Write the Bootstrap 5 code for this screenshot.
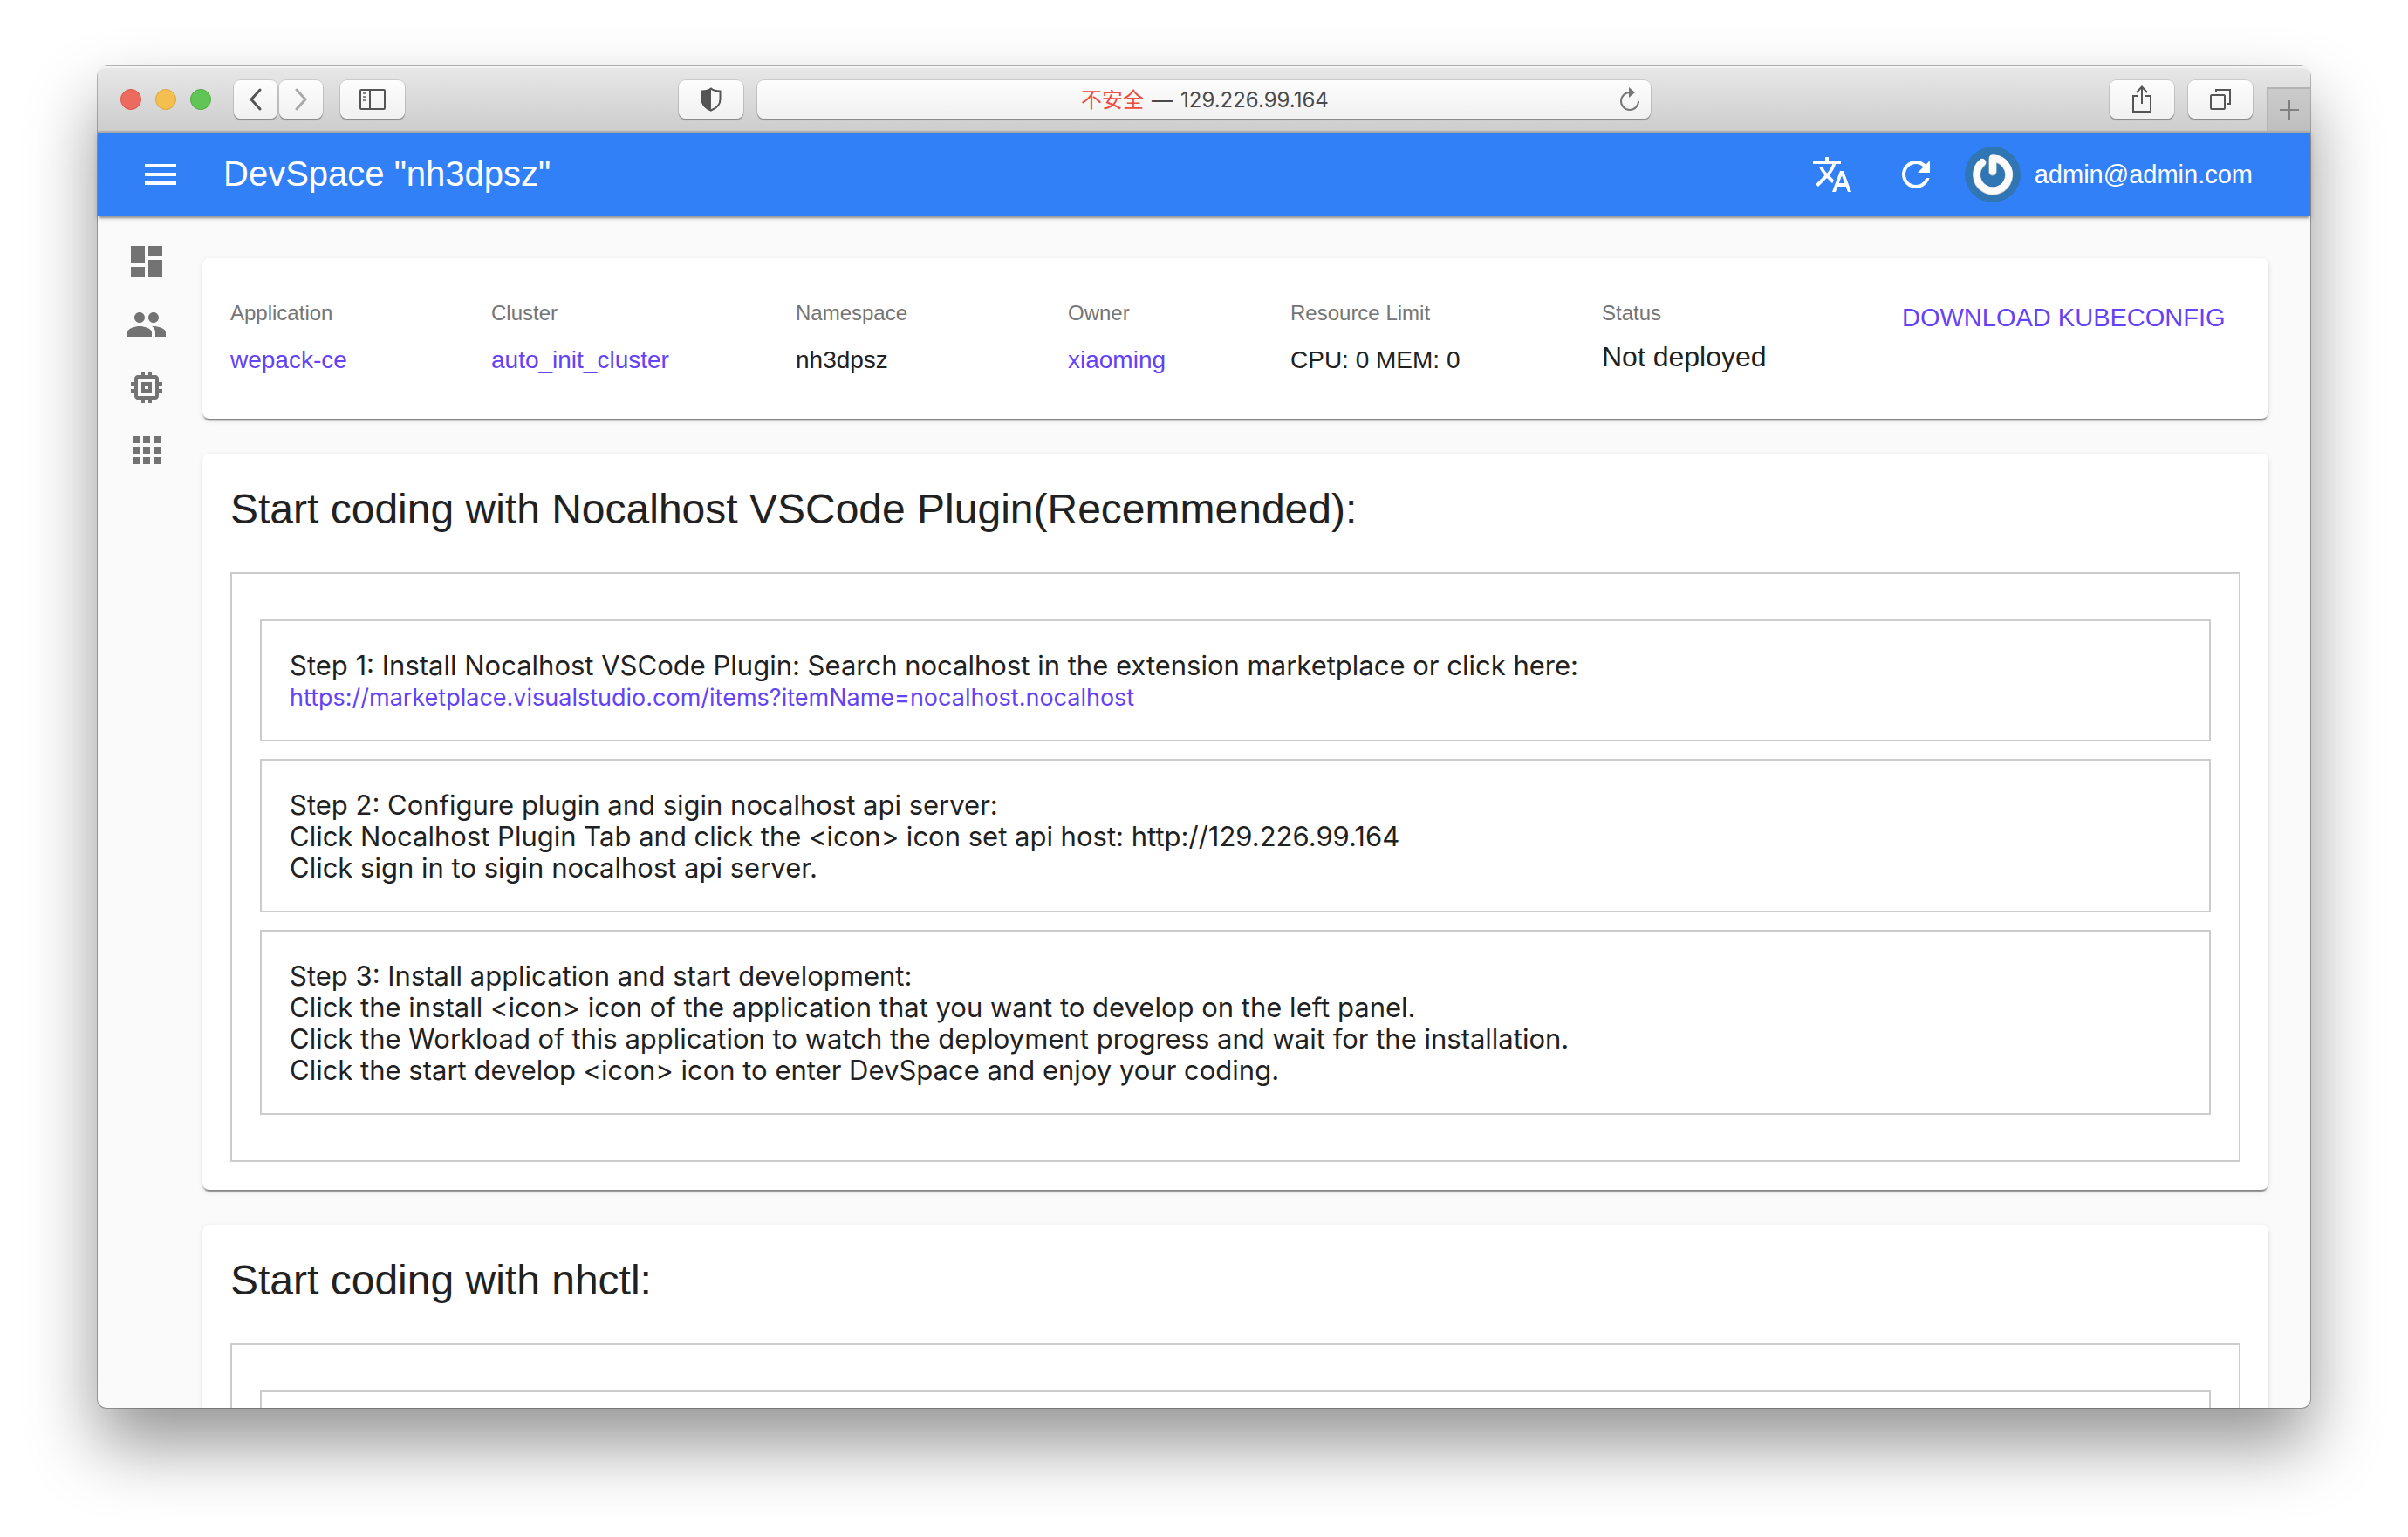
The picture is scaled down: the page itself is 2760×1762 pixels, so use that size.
<!DOCTYPE html>
<html lang="en">
<head>
<meta charset="utf-8">
<meta name="viewport" content="width=device-width, initial-scale=1">
<title>DevSpace</title>
<link href="https://cdn.jsdelivr.net/npm/bootstrap@5.3.0/dist/css/bootstrap.min.css" rel="stylesheet">
<script src="https://cdn.jsdelivr.net/npm/bootstrap@5.3.0/dist/js/bootstrap.bundle.min.js"></script>
<style>
  body { background: #fff; color: #212121; font-family: "Liberation Sans", Arial, sans-serif; padding: 76px 112px 148px; }
  svg { display: block; flex: none; }
  a, a:hover { color: #6442f5; text-decoration: none; }
  .browser { border-radius: 12px 12px 10px 10px; background: #fafafa; box-shadow: 0 0 0 1px rgba(0,0,0,.28), 0 42px 80px rgba(0,0,0,.42); }

  .toolbar { height: 76px; flex: none; padding: 2px 0 0 26px; background: linear-gradient(#e8e8e8, #cdcdcd); border-bottom: 2px solid #b1b1b1; box-shadow: inset 0 2px 0 #f4f4f4; }
  .light { width: 24px; height: 24px; border-radius: 50%; border: 1px solid; padding: 0; }
  .light-close { background: #ed6a5e; border-color: #d8574c; }
  .light-min { background: #f5bf4f; border-color: #dba63b; }
  .light-max { background: #61c555; border-color: #50ab42; }
  .chrome-btn, .address { height: 44px; border: 0; border-radius: 8px; background: linear-gradient(#fdfdfd, #f1f1f1); box-shadow: 0 0 0 1px rgba(0,0,0,.1), 0 2px 1px rgba(0,0,0,.25); color: #555; padding: 0; display: flex; align-items: center; justify-content: center; }
  .w-nav { width: 50px; }
  .w-tool { width: 74px; }
  .history { margin: 0 20px 0 26px; gap: 2px; }
  .space-left { flex: 314 1 0; }
  .space-right { flex: 526 1 0; }
  .address { flex: 0 1 1024px; margin-left: 16px; padding: 0 12px; font: 24px/32px Inter, "Noto Sans CJK SC", sans-serif; color: #4a4a4a; }
  .address-text { padding: 2px 0 0 40px; gap: 9px; }
  .address-text input { width: 182px; border: 0; padding: 0; background: none; color: inherit; font: inherit; outline: 0; }
  .insecure { color: #f04b3c; }
  .new-tab { width: 50px; height: 50px; margin-left: 16px; border: 0; border-top: 2px solid #b4b4b4; border-left: 2px solid #b4b4b4; background: linear-gradient(#cbcbcb, #bfbfbf); color: #808080; padding: 0; }

  .appbar { height: 96px; background: #3280f7; color: #fff; padding: 0 66px 0 48px; box-shadow: 0 4px 2px -2px rgba(0,0,0,.3), 0 2px 6px rgba(0,0,0,.2); z-index: 1; flex: none; }
  .appbar h1 { font-size: 40px; line-height: 48px; font-weight: 400; margin: 0 0 2px 48px; }
  .appbar button { border: 0; background: none; color: inherit; padding: 0; }
  .account { gap: 16px; font-size: 29px; line-height: 36px; }

  .side { width: 120px; flex: none; padding: 28px 0 0 32px; gap: 24px; }
  .side a { color: #737373; width: 48px; }
  .content { padding: 48px 48px 0 0; gap: 40px; min-width: 0; }
  .panel { border: 0; border-radius: 8px; background: #fff; color: inherit; box-shadow: 0 4px 2px -2px rgba(0,0,0,.36), 0 2px 2px rgba(0,0,0,.14), 0 2px 6px rgba(0,0,0,.1); padding: 32px; flex: none; }
  .summary { display: grid; grid-template-columns: 299fr 349fr 312fr 255fr 357fr 344fr 388fr; padding: 44px 32px; margin: 0; }
  .summary dt { font-size: 24px; line-height: 38px; font-weight: 400; color: #757575; margin-bottom: 10px; }
  .summary dd { font-size: 28px; line-height: 50px; margin: 0; }
  .summary .status { font-size: 32px; line-height: 42px; }
  .download { border: 0; background: none; padding: 0; color: #6442f5; font-size: 29px; line-height: 48px; align-self: start; text-align: left; }
  .summary, .summary dd { margin-bottom: 0; }
  .summary { padding-bottom: 42px; }
  .panel h2 { font-size: 48px; line-height: 64px; font-weight: 400; margin-bottom: 40px; }
  .frame { border: 2px solid #ccc; padding: 52px 32px; gap: 20px; }
  .step { border: 2px solid #ccc; padding: 33px 32px 31px; min-height: 140px; font: 31px/36px Inter, sans-serif; }
  .step p { margin: 0; }
  .step a { font-size: 27px; line-height: 38px; margin-bottom: -2px; display: block; }
</style>
</head>
<body class="vh-100">
<div class="browser d-flex flex-column h-100">
  <header class="toolbar d-flex align-items-center rounded-top-3">
    <div class="d-flex gap-3">
      <button class="light light-close" aria-label="Close"></button>
      <button class="light light-min" aria-label="Minimize"></button>
      <button class="light light-max" aria-label="Zoom"></button>
    </div>
    <div class="history d-flex">
      <button class="chrome-btn w-nav" aria-label="Back"><svg width="14" height="26" fill="none" stroke="currentColor" stroke-width="3" stroke-linecap="round" stroke-linejoin="round"><path d="M12 2 2 13l10 11"/></svg></button>
      <button class="chrome-btn w-nav" aria-label="Forward"><svg width="14" height="26" fill="none" stroke="#aaa" stroke-width="3" stroke-linecap="round" stroke-linejoin="round"><path d="M2 2l10 11L2 24"/></svg></button>
    </div>
    <button class="chrome-btn w-tool" aria-label="Sidebar"><svg width="30" height="24" fill="none" stroke="currentColor" stroke-width="2"><rect x="1" y="1" width="28" height="22" rx="1"/><path d="M12 1v22"/><path stroke="#888" d="M4 5h4M4 9h4M4 13h4"/></svg></button>
    <div class="space-left"></div>
    <button class="chrome-btn w-tool" aria-label="Privacy report"><svg width="24" height="28" viewBox="0 0 24 28"><path d="M12 1.5C9.500 3.800 5.500 4.500 1.500 4.500V14c0 6 4.500 10 10.500 12.500C18 24 22.500 20 22.500 14V4.500C18.500 4.500 14.500 3.800 12 1.500z" fill="none" stroke="currentColor" stroke-width="2"/><path d="M12 1C9 3.500 5 4 1 4v10c0 6 4.500 11 11 13.500z" fill="currentColor"/></svg></button>
    <div class="address">
      <div class="address-text d-flex flex-grow-1 justify-content-center">
        <label class="insecure" for="url">不安全</label><span>—</span><input id="url" value="129.226.99.164">
      </div>
      <button class="btn p-0 border-0" aria-label="Reload"><svg width="26" height="30" viewBox="0 0 26 30" fill="none" stroke="#777" stroke-width="2"><path d="M14 7a10 10 0 1 0 10 10"/><path d="M13 1l7 6-7 6z" fill="#777" stroke="none"/></svg></button>
    </div>
    <div class="space-right"></div>
    <div class="d-flex gap-3">
      <button class="chrome-btn w-tool" aria-label="Share"><svg width="24" height="32" fill="none" stroke="currentColor" stroke-width="2"><path d="M8 12H2v18h20V12h-6M12 21V2M6 8l6-6.500L18 8"/></svg></button>
      <button class="chrome-btn w-tool" aria-label="Show tabs"><svg width="26" height="26" fill="none" stroke="currentColor" stroke-width="2"><rect x="2" y="8" width="16" height="16" rx="1"/><path d="M8 5V2h16v16h-3"/></svg></button>
    </div>
    <button class="new-tab align-self-end d-flex align-items-center justify-content-center" aria-label="New tab"><svg width="22" height="22" stroke="currentColor" stroke-width="2"><path d="M11 0v22M0 11h22"/></svg></button>
  </header>

  <nav class="appbar d-flex align-items-center position-relative">
    <button aria-label="Menu"><svg width="48" height="48" viewBox="0 0 24 24" fill="currentColor"><path d="M3 18h18v-2H3v2zm0-5h18v-2H3v2zm0-7v2h18V6H3z"/></svg></button>
    <h1>DevSpace "nh3dpsz"</h1>
    <div class="d-flex gap-5 ms-auto me-4 pe-2">
      <button aria-label="Language"><svg width="48" height="48" viewBox="0 0 24 24" fill="currentColor"><path d="M12.870 15.070l-2.540-2.510.030-.030c1.740-1.940 2.980-4.170 3.710-6.530H17V4h-7V2H8v2H1v1.990h11.170C11.500 7.920 10.440 9.750 9 11.350 8.070 10.320 7.300 9.190 6.690 8h-2c.730 1.630 1.730 3.170 2.980 4.560l-5.090 5.020L4 19l5-5 3.110 3.110.760-2.040zM18.500 10h-2L12 22h2l1.120-3h4.750L21 22h2l-4.500-12zm-2.620 7l1.620-4.330L19.120 17h-3.240z"/></svg></button>
      <button aria-label="Refresh"><svg width="48" height="48" viewBox="0 0 24 24" fill="currentColor"><path d="M17.650 6.350C16.200 4.900 14.210 4 12 4c-4.420 0-7.990 3.580-7.990 8s3.570 8 7.990 8c3.730 0 6.840-2.550 7.730-6h-2.080c-.820 2.330-3.040 4-5.650 4-3.310 0-6-2.690-6-6s2.690-6 6-6c1.660 0 3.140.690 4.220 1.780L13 11h7V4l-2.350 2.350z"/></svg></button>
    </div>
    <button class="account d-flex align-items-center">
      <svg width="64" height="64"><circle cx="32" cy="32" r="32" fill="#3075b4"/><g fill="none" stroke-width="9" stroke-linecap="round" stroke-linejoin="round"><path d="M32 29V14A18.500 18.500 0 1 1 20 18.500" stroke="#c9cfd4"/><path d="M32 28V13.500A18.500 18.500 0 1 1 20 18" stroke="#fbfbfb" stroke-width="8"/></g></svg>
      <span>admin@admin.com</span>
    </button>
  </nav>

  <div class="d-flex flex-grow-1 overflow-hidden rounded-bottom-3">
    <aside class="side d-flex flex-column">
      <a href="#" aria-label="Dashboard"><svg width="48" height="48" viewBox="0 0 24 24" fill="currentColor"><path d="M3 13h8V3H3v10zm0 8h8v-6H3v6zm10 0h8V11h-8v10zm0-18v6h8V3h-8z"/></svg></a>
      <a href="#" aria-label="Users"><svg width="48" height="48" viewBox="0 0 24 24" fill="currentColor"><path d="M16 11c1.660 0 2.990-1.340 2.990-3S17.660 5 16 5c-1.660 0-3 1.340-3 3s1.340 3 3 3zm-8 0c1.660 0 2.990-1.340 2.990-3S9.660 5 8 5C6.340 5 5 6.340 5 8s1.340 3 3 3zm0 2c-2.330 0-7 1.170-7 3.500V19h14v-2.500c0-2.330-4.670-3.500-7-3.500zm8 0c-.290 0-.620.020-.970.050 1.160.840 1.970 1.970 1.970 3.450V19h6v-2.500c0-2.330-4.670-3.500-7-3.500z"/></svg></a>
      <a href="#" aria-label="Clusters"><svg width="48" height="48" viewBox="0 0 24 24" fill="currentColor"><path d="M15 9H9v6h6V9zm-2 4h-2v-2h2v2zm8-2V9h-2V7c0-1.100-.900-2-2-2h-2V3h-2v2h-2V3H9v2H7c-1.100 0-2 .900-2 2v2H3v2h2v2H3v2h2v2c0 1.100.900 2 2 2h2v2h2v-2h2v2h2v-2h2c1.100 0 2-.900 2-2v-2h2v-2h-2v-2h2zm-4 6H7V7h10v10z"/></svg></a>
      <a href="#" aria-label="Applications"><svg width="48" height="48" viewBox="0 0 24 24" fill="currentColor"><path d="M4 8h4V4H4v4zm6 12h4v-4h-4v4zm-6 0h4v-4H4v4zm0-6h4v-4H4v4zm6 0h4v-4h-4v4zm6-10v4h4V4h-4zm-6 4h4V4h-4v4zm6 6h4v-4h-4v4zm0 6h4v-4h-4v4z"/></svg></a>
    </aside>

    <main class="content d-flex flex-column flex-grow-1">
      <section class="panel p-0">
        <dl class="summary">
          <div><dt>Application</dt><dd><a href="#">wepack-ce</a></dd></div>
          <div><dt>Cluster</dt><dd><a href="#">auto_init_cluster</a></dd></div>
          <div><dt>Namespace</dt><dd>nh3dpsz</dd></div>
          <div><dt>Owner</dt><dd><a href="#">xiaoming</a></dd></div>
          <div><dt>Resource Limit</dt><dd>CPU: 0 MEM: 0</dd></div>
          <div><dt>Status</dt><dd class="status">Not deployed</dd></div>
          <button class="download text-nowrap">DOWNLOAD KUBECONFIG</button>
        </dl>
      </section>

      <section class="panel">
        <h2>Start coding with Nocalhost VSCode Plugin(Recemmended):</h2>
        <div class="frame d-flex flex-column">
          <div class="step">
            <p>Step 1: Install Nocalhost VSCode Plugin: Search nocalhost in the extension marketplace or click here:</p>
            <a href="#">https://marketplace.visualstudio.com/items?itemName=nocalhost.nocalhost</a>
          </div>
          <div class="step">
            <p>Step 2: Configure plugin and sigin nocalhost api server:</p>
            <p>Click Nocalhost Plugin Tab and click the &lt;icon&gt; icon set api host: http://129.226.99.164</p>
            <p>Click sign in to sigin nocalhost api server.</p>
          </div>
          <div class="step">
            <p>Step 3: Install application and start development:</p>
            <p>Click the install &lt;icon&gt; icon of the application that you want to develop on the left panel.</p>
            <p>Click the Workload of this application to watch the deployment progress and wait for the installation.</p>
            <p>Click the start develop &lt;icon&gt; icon to enter DevSpace and enjoy your coding.</p>
          </div>
        </div>
      </section>

      <section class="panel">
        <h2>Start coding with nhctl:</h2>
        <div class="frame d-flex flex-column">
          <div class="step"></div>
        </div>
      </section>
    </main>
  </div>
</div>
</body>
</html>
